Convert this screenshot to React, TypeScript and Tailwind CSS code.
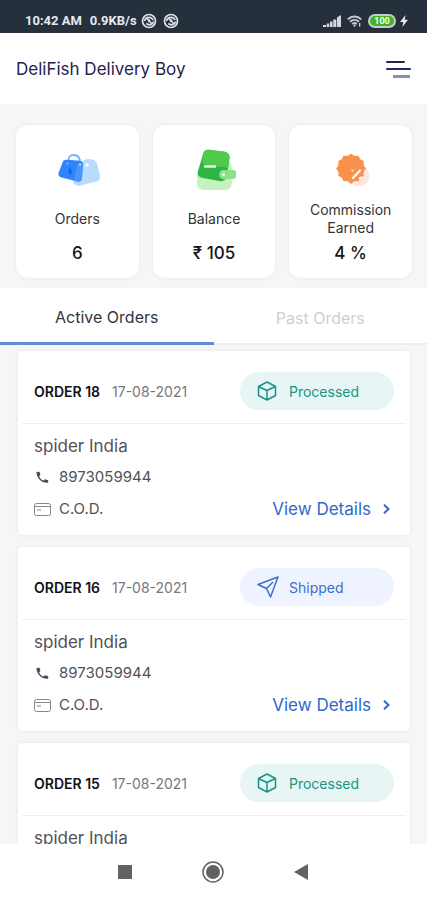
import { useState } from "react";
import clsx from "clsx";

type Status = "processed" | "shipped";

interface Order {
  id: number;
  date: string;
  customer: string;
  phone: string;
  payment: string;
  status: Status;
}

const orders: Order[] = [
  { id: 18, date: "17-08-2021", customer: "spider India", phone: "8973059944", payment: "C.O.D.", status: "processed" },
  { id: 16, date: "17-08-2021", customer: "spider India", phone: "8973059944", payment: "C.O.D.", status: "shipped" },
  { id: 15, date: "17-08-2021", customer: "spider India", phone: "8973059944", payment: "C.O.D.", status: "processed" },
];

const SyncIcon = () => (
  <svg className="size-4" viewBox="0 0 16 16" fill="none" stroke="#dfe2e6" strokeWidth="1.7" aria-hidden="true">
    <circle cx="8" cy="8" r="6.5" />
    <path d="M3.500 8C4 4.500 8 3.500 10.500 5.200L12.300 7M12.500 8.500C12 12 8 12.700 5.300 10.500M5 4.500l6.500 7M7 8.500l2-1.500" />
  </svg>
);

const SignalIcon = () => (
  <svg className="h-3 w-[18px]" viewBox="0 0 18 12" fill="#d4d7db" aria-hidden="true">
    <path d="M0 10h3v2H0zM3.700 8.500h2.600V12H3.700zM7 6.500h2.600V12H7zM10.300 4.500h3V12h-3zM14 2.500l4-2.500v12h-4z" />
  </svg>
);

const WifiIcon = () => (
  <svg className="h-3 w-[15px]" viewBox="0 0 16 12" fill="none" stroke="#c4c8cd" strokeWidth="2" aria-hidden="true">
    <path d="M.8 4.200C5 .2 11 .2 15.200 4.200M3.200 6.800c2.800-2.600 6.800-2.600 9.600 0M5.600 9.300c1.400-1.300 3.400-1.300 4.800 0" />
    <circle cx="8" cy="10.800" r="1.200" fill="#d4d7db" stroke="none" />
    <path d="M13.500 8v4" strokeWidth="1.500" />
  </svg>
);

const BoltIcon = () => (
  <svg className="h-3 w-2" viewBox="0 0 8 12" fill="#e8eaed" aria-hidden="true">
    <path d="M5.500 0 0 7h3.300L2.300 12 8 4.800H4.700z" />
  </svg>
);

const BagIcon = () => (
  <svg className="h-8 w-[42px]" viewBox="0 0 42 32" fill="none" aria-hidden="true">
    <path d="M24 9c1-3 3-4 6-4l4 .500c2.500.300 4 1.500 5 4l3 12c.6 3-.5 5-3.500 6L23 31.500c-4 1-7-.5-8-3.500z" fill="#b9dbff" />
    <circle cx="29" cy="11" r="1.700" fill="#fff" />
    <path d="M10.500 8.500C10 3 12 1 15.500 1S22 3 22 8.500" stroke="#74b1fa" strokeWidth="1.800" />
    <path d="M4.500 8.500C5 6.500 6.500 5.500 9 5.700l13 1.100c2 .200 3 1.300 3 3.200L24 24.500c-.2 2.500-2 3.500-4.500 3L3.500 23.500C1 22.800 0 21.300.5 19z" fill="#2f86fb" />
    <path d="M19 11 24.500 9 24 24.500c-.2 2.500-2 3.500-4.500 3L16 26.500z" fill="#4a97fc" />
    <path d="m11.500 13-1 5 2 3.500 1.500-4.500z" fill="#1264dc" />
    <circle cx="22" cy="10.500" r="1.200" fill="#a9d2ff" />
    <circle cx="9.500" cy="9.500" r="1" fill="#8dc3ff" />
  </svg>
);

const WalletIcon = () => (
  <svg className="h-[42px] w-10" viewBox="0 0 40 42" fill="none" aria-hidden="true">
    <path d="M1 24h12L30 9c5 3 6 7 6 13v10c0 7-3 9-8 9H9c-5 0-8-2-8-7z" fill="#c4f3bf" />
    <path d="M7 5c1-4 4-5 8-4l12 1.500c5 .500 7 3 6.500 7L31 26c-.7 5-4 7-8 6L7 29c-4-.800-6-3-5-7z" fill="#2eb444" />
    <path d="M7 5c1-4 4-5 8-4l12 1.500c5 .500 7 3 6.500 7L32 19c-7-2-15 0-26-5z" fill="#50ca4d" />
    <path d="M9 17.500h10" stroke="#e4fae4" strokeWidth="2.500" strokeLinecap="round" />
    <path d="M27 21h10c2 0 3 1 3 2v5c0 1-1 2-3 2H27c-5 0-5-9 0-9z" fill="#8edf89" />
    <circle cx="27.500" cy="25.500" r="1.700" fill="#d9f7d6" />
  </svg>
);

const CommissionIcon = () => (
  <svg className="h-8 w-[34px]" viewBox="0 0 34 32" fill="none" aria-hidden="true">
    <circle cx="23" cy="22" r="10.500" fill="#ffe5df" />
    <path
      d="M15 .500q3 3 7 2 1 4 5 5-1 4 2 7-3 3-2 7-4 1-5 5-4-1-7 2.500-3-3.500-7-2.500-1-4-5-5 1-4-2-7 3-3 2-7 4-1 5-5 4 1 7-2z"
      fill="#f8914c"
      stroke="#f8914c"
      strokeWidth="1.500"
      strokeLinejoin="round"
    />
    <path d="m17 24 7-7.500" stroke="#fff" strokeWidth="2.200" strokeLinecap="round" />
    <circle cx="16.500" cy="16.500" r="1.200" fill="#ffd8b9" />
    <circle cx="24.500" cy="24" r="1.500" fill="#fff" />
  </svg>
);

const BoxIcon = () => (
  <svg className="size-5" viewBox="0 0 20 20" fill="none" stroke="currentColor" strokeWidth="1.500" strokeLinejoin="round" aria-hidden="true">
    <path d="m10 1 8.500 4.500v9L10 19l-8.500-4.500v-9zM1.500 5.500 10 9.500l8.500-4M10 9.500V19" />
  </svg>
);

const PlaneIcon = () => (
  <svg className="size-[22px]" viewBox="0 0 22 22" fill="none" stroke="currentColor" strokeWidth="1.500" strokeLinejoin="round" aria-hidden="true">
    <path d="M21 1 1 8.500l8.500 4L13.500 21zM9.500 12.500 16 6" />
  </svg>
);

const PhoneIcon = () => (
  <svg className="mx-0.5 size-[13px] shrink-0" viewBox="0 0 13 13" aria-hidden="true">
    <path d="M.500 1 3.500.8l.9 3-1.300 1.600c1 1.900 2.300 3.200 4.200 4.200l1.700-1.300 3.200.9v2.600C6 12.500.3 7 .5 1z" fill="#4b4863" />
  </svg>
);

const CardIcon = () => (
  <svg className="h-[15px] w-[17px] shrink-0" viewBox="0 0 17 15" fill="none" stroke="#85858c" aria-hidden="true">
    <rect x=".5" y="1.500" width="16" height="12" rx="2" />
    <path d="M.500 4.500h16M3 8h4" />
  </svg>
);

const stats = [
  { label: "Orders", value: "6", icon: <BagIcon /> },
  { label: "Balance", value: "₹ 105", icon: <WalletIcon /> },
  { label: "Commission Earned", value: "4 %", icon: <CommissionIcon /> },
];

function StatusBar() {
  return (
    <div className="flex h-[33px] shrink-0 items-end justify-between bg-[#26303d] pr-[19px] pb-1 pl-[25px] font-[Roboto,sans-serif] text-[13px] leading-4 font-bold text-[#e8eaed]">
      <div className="flex items-center gap-1">
        <span>10:42 AM</span>
        <span className="ml-1">0.9KB/s</span>
        <SyncIcon />
        <span className="ml-0.5">
          <SyncIcon />
        </span>
      </div>
      <div className="flex h-4 items-center gap-1">
        <SignalIcon />
        <span className="mx-0.5">
          <WifiIcon />
        </span>
        <span className="flex h-[14px] w-7 items-center justify-center rounded-full border-2 border-[#c8ccd0] bg-[#43b51c] text-[9px] leading-none text-white">
          100
        </span>
        <BoltIcon />
      </div>
    </div>
  );
}

function OrderCard({ order }: { order: Order }) {
  const shipped = order.status === "shipped";

  return (
    <article className="h-[184px] shrink-0 rounded bg-white px-1 shadow-[0_0_3px_1px_#ececec]">
      <div className="flex h-[73px] items-center border-b border-[#eeeeee] px-3 pt-2">
        <h2 className="text-[14px] font-semibold text-[#111019]">ORDER {order.id}</h2>
        <time className="ml-3 text-[14px] text-[#77777b]">{order.date}</time>
        <div
          className={clsx(
            "ml-auto flex h-[38px] w-[154px] items-center rounded-full pl-[17px] text-[14px]",
            shipped ? "gap-2.5 bg-[#eff3ff] text-[#3b70c9]" : "gap-3 bg-[#e7f5f4] text-[#159587]"
          )}
        >
          {shipped ? <PlaneIcon /> : <BoxIcon />}
          {shipped ? "Shipped" : "Processed"}
        </div>
      </div>
      <div className="px-3 pt-[7px] text-[15px] leading-8 text-[#515158]">
        <p className="text-[17px] leading-[30px]">{order.customer}</p>
        <p className="flex items-center gap-2">
          <PhoneIcon />
          {order.phone}
        </p>
        <div className="flex items-center justify-between">
          <p className="flex items-center gap-2">
            <CardIcon />
            {order.payment}
          </p>
          <a href="#details" className="flex items-center gap-3 pr-1 text-[17px] text-[#2d69cb]">
            View Details
            <svg className="h-[10px] w-[7px]" viewBox="0 0 7 10" fill="none" stroke="currentColor" strokeWidth="2" aria-hidden="true">
              <path d="m1 .800 4.500 4.200L1 9.200" />
            </svg>
          </a>
        </div>
      </div>
    </article>
  );
}

export default function App() {
  const [tab, setTab] = useState<"active" | "past">("active");

  return (
    <div className="flex h-screen flex-col overflow-hidden bg-[#f6f6f6] font-[Inter,'Noto_Sans',sans-serif]">
      <StatusBar />

      <header className="flex h-[71px] shrink-0 items-center justify-between bg-white px-4 pt-0.5">
        <h1 className="text-[17px] text-[#24244e]">DeliFish Delivery Boy</h1>
        <button type="button" aria-label="Menu">
          <svg className="h-5 w-[25px]" viewBox="0 0 25 20" fill="none" strokeWidth="2" strokeLinecap="round" aria-hidden="true">
            <path d="M1 2h17" stroke="#25263d" />
            <path d="M1 9h23" stroke="#252b62" />
            <path d="M7 16.500h17" stroke="#8790ad" strokeWidth="3" strokeLinecap="butt" />
          </svg>
        </button>
      </header>

      <section className="grid shrink-0 grid-cols-3 gap-[14px] pt-[21px] pr-[15px] pb-[10px] pl-4 text-center">
        {stats.map((stat) => (
          <div key={stat.label} className="flex h-[153px] flex-col items-center rounded-xl bg-white pt-6 shadow-[0_0_3px_1px_#ededed]">
            <div className="flex h-[42px] items-center justify-center pl-1">{stat.icon}</div>
            <div className="mt-1.5 flex h-11 items-center px-2 text-[14px] leading-[18px] text-[#343434]">{stat.label}</div>
            <div className="text-[17px] leading-6 font-medium text-[#151515]">{stat.value}</div>
          </div>
        ))}
      </section>

      <div role="tablist" className="grid h-[57px] shrink-0 grid-cols-2 bg-white text-[16px]">
        <button
          type="button"
          role="tab"
          aria-selected={tab === "active"}
          onClick={() => setTab("active")}
          className={clsx("pt-1", tab === "active" ? "border-b-[3px] border-[#648bd4] text-[#34343c]" : "border-b-2 border-[#eeeeee] text-[#cfcfcf]")}
        >
          Active Orders
        </button>
        <button
          type="button"
          role="tab"
          aria-selected={tab === "past"}
          onClick={() => setTab("past")}
          className={clsx("pt-1", tab === "past" ? "border-b-[3px] border-[#648bd4] text-[#34343c]" : "border-b-2 border-[#eeeeee] text-[#cfcfcf]")}
        >
          Past Orders
        </button>
      </div>

      <main className="flex min-h-0 flex-1 flex-col gap-3 overflow-hidden pt-[6px] pr-[17px] pl-[18px]">
        {tab === "active" && orders.map((order) => <OrderCard key={order.id} order={order} />)}
      </main>

      <nav className="flex h-14 shrink-0 items-center justify-center gap-[70px] bg-white pr-0.5">
        <button type="button" aria-label="Recent apps">
          <svg className="size-[14px]" viewBox="0 0 14 14" aria-hidden="true">
            <path d="M0 0h14v14H0z" fill="#626262" />
          </svg>
        </button>
        <button type="button" aria-label="Home">
          <svg className="size-[22px]" viewBox="0 0 22 22" fill="none" aria-hidden="true">
            <circle cx="11" cy="11" r="10" stroke="#626262" strokeWidth="1.500" />
            <circle cx="11" cy="11" r="7" fill="#626262" />
          </svg>
        </button>
        <button type="button" aria-label="Back">
          <svg className="h-4 w-[14px]" viewBox="0 0 14 16" aria-hidden="true">
            <path d="M14 0v16L0 8z" fill="#626262" />
          </svg>
        </button>
      </nav>
    </div>
  );
}
